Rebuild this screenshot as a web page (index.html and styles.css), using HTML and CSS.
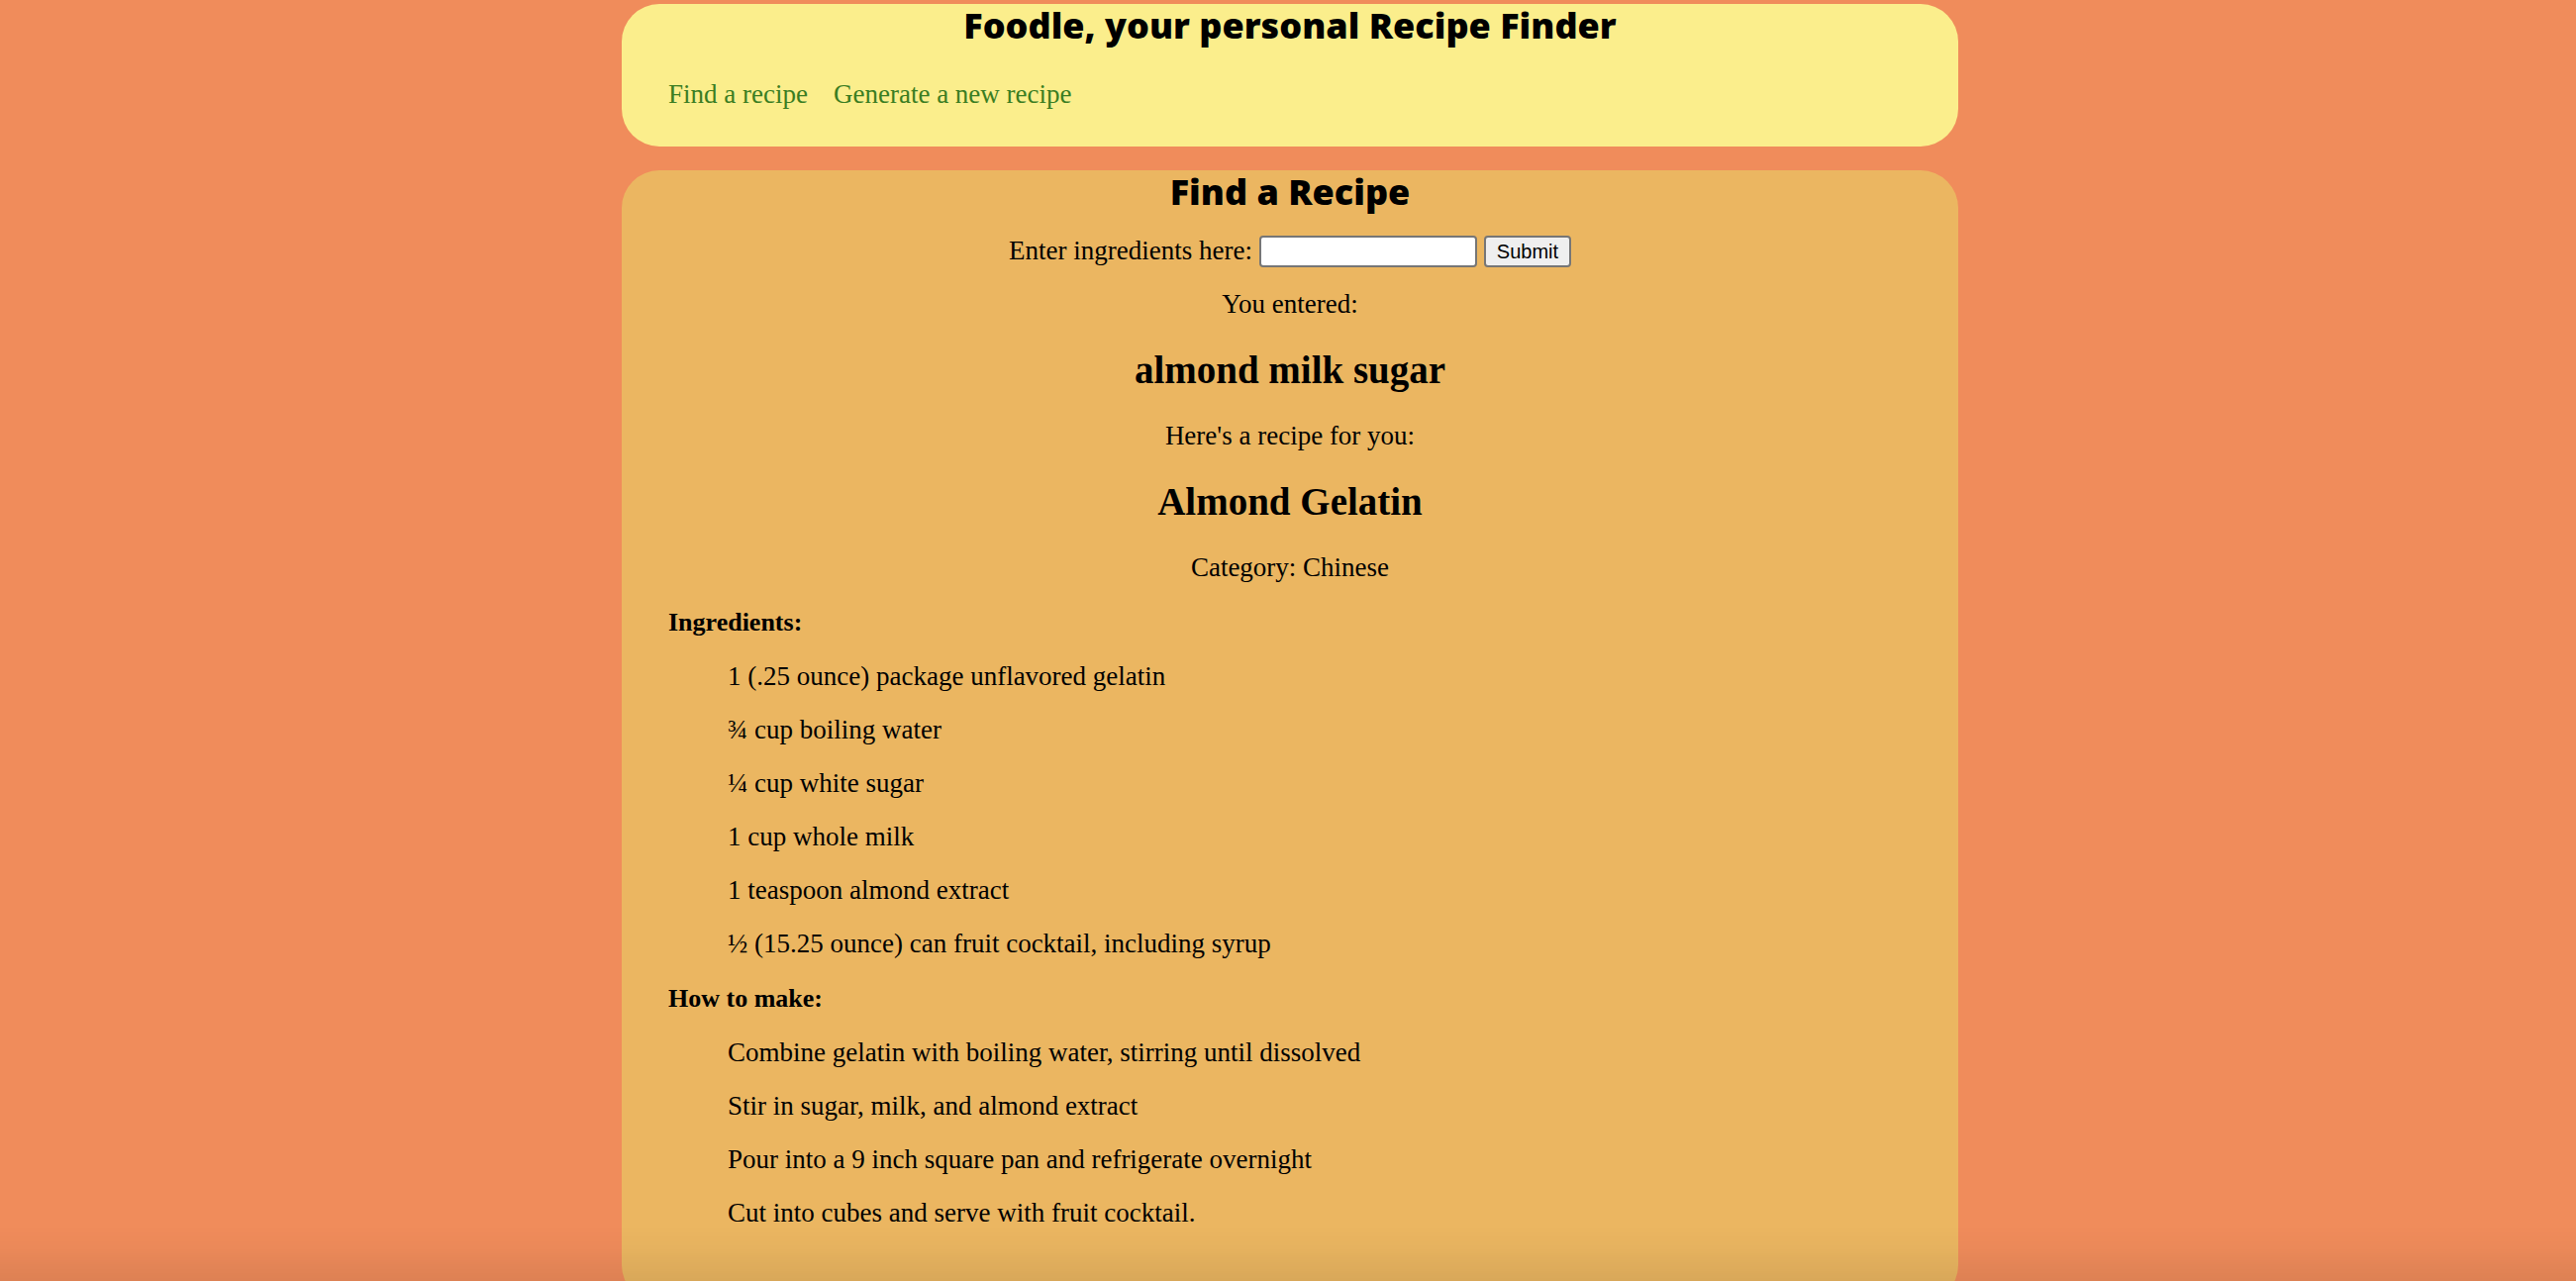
FILE: index.html
```html
<!DOCTYPE html>
<html lang="en">
<head>
<meta charset="utf-8">
<title>Foodle</title>
<link rel="stylesheet" href="styles.css">
</head>
<body>
<header class="card site-header">
  <h1 class="title">Foodle, your personal Recipe Finder</h1>
  <nav class="nav">
    <a href="#find">Find a recipe</a>
    <a href="#generate">Generate a new recipe</a>
  </nav>
</header>
<main class="card recipe" id="find">
  <h1 class="title">Find a Recipe</h1>
  <form class="search">
    <label for="ingredients">Enter ingredients here:</label>
    <input type="text" id="ingredients" name="ingredients">
    <button type="submit">Submit</button>
  </form>
  <section class="result">
    <p>You entered:</p>
    <h2>almond milk sugar</h2>
    <p>Here's a recipe for you:</p>
    <h2>Almond Gelatin</h2>
    <p>Category: Chinese</p>
  </section>
  <h3>Ingredients:</h3>
  <ul class="lines">
    <li>1 (.25 ounce) package unflavored gelatin</li>
    <li>¾ cup boiling water</li>
    <li>¼ cup white sugar</li>
    <li>1 cup whole milk</li>
    <li>1 teaspoon almond extract</li>
    <li>½ (15.25 ounce) can fruit cocktail, including syrup</li>
  </ul>
  <h3>How to make:</h3>
  <ol class="lines">
    <li>Combine gelatin with boiling water, stirring until dissolved</li>
    <li>Stir in sugar, milk, and almond extract</li>
    <li>Pour into a 9 inch square pan and refrigerate overnight</li>
    <li>Cut into cubes and serve with fruit cocktail.</li>
  </ol>
</main>
</body>
</html>
```
FILE: styles.css
```css
* {
  box-sizing: border-box;
}

html {
  background: #f08c5b;
  scrollbar-width: none;
}

body {
  margin: 0;
  padding: 4px 0 24px 4px;
  font-family: "Bodoni 72", "Liberation Serif", serif;
  font-size: 27px;
  line-height: 30px;
  color: #000;
}

/* soft shade along the bottom edge of the window */
body::after {
  content: "";
  position: fixed;
  left: 0;
  right: 0;
  bottom: 0;
  height: 56px;
  background: linear-gradient(rgba(0, 0, 0, 0), rgba(0, 0, 0, 0.02) 40%, rgba(0, 0, 0, 0.08));
  pointer-events: none;
}

.card {
  max-width: 1350px;
  margin: 0 auto 24px;
  padding: 0 47px;
  border-radius: 38px;
}

.site-header {
  background: #fbee8c;
  padding-bottom: 38px;
}

.recipe {
  background: #ebb661;
  padding-bottom: 76px;
}

.title {
  margin: 0;
  font-family: "Gill Sans", "Open Sans", sans-serif;
  font-size: 36px;
  font-weight: 800;
  line-height: 44px;
  text-align: center;
}

.nav {
  display: flex;
  gap: 26px;
  margin-top: 32px;
}

.nav a {
  color: #3a7d22;
  text-decoration: none;
}

.search {
  display: flex;
  justify-content: center;
  align-items: flex-start;
  gap: 7px;
  margin: 22px 0;
}

.search input,
.search button {
  height: 32px;
  border: 2px solid #767676;
  border-radius: 4px;
  font: 20px "Liberation Sans", sans-serif;
  color: #000;
}

.search input {
  width: 220px;
  padding: 0 4px;
  background: #fff;
}

.search button {
  width: 88px;
  padding: 0;
  background: #efefef;
}

.result {
  text-align: center;
}

p {
  margin: 0;
}

h2 {
  margin: 28px 0;
  font-size: 39px;
  line-height: 47px;
}

h3 {
  margin: 26px 0 24px;
  font-size: 26px;
  line-height: 30px;
}

.lines {
  display: grid;
  gap: 24px;
  margin: 0;
  padding: 0 0 0 60px;
  list-style: none;
}
```
